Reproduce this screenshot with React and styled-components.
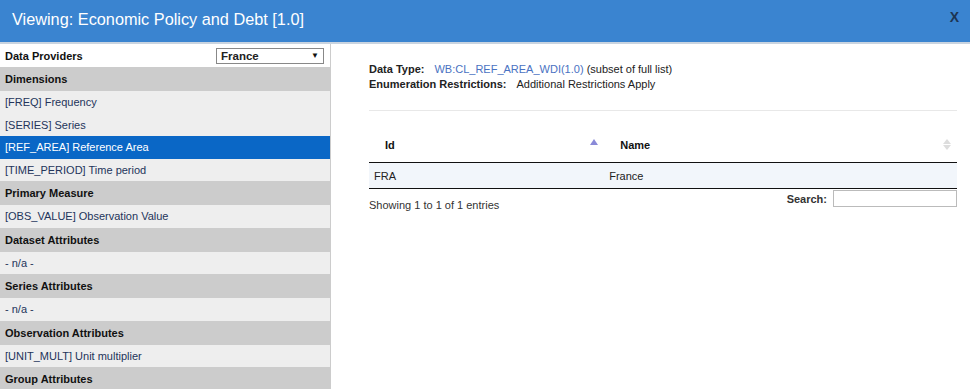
import React from 'react';
import styled, { createGlobalStyle } from 'styled-components';

const GlobalStyle = createGlobalStyle`
  html, body {
    margin: 0;
    padding: 0;
    background: #fff;
    font-family: "Liberation Sans", Arial, sans-serif;
  }
`;

const sections = [
  {
    title: 'Dimensions',
    items: ['[FREQ] Frequency', '[SERIES] Series', '[REF_AREA] Reference Area', '[TIME_PERIOD] Time period'],
  },
  { title: 'Primary Measure', items: ['[OBS_VALUE] Observation Value'] },
  { title: 'Dataset Attributes', items: ['- n/a -'] },
  { title: 'Series Attributes', items: ['- n/a -'] },
  { title: 'Observation Attributes', items: ['[UNIT_MULT] Unit multiplier'] },
  { title: 'Group Attributes', items: [] },
];

export default function App() {
  return (
    <Dialog>
      <GlobalStyle />
      <TitleBar>
        <Title>Viewing: Economic Policy and Debt [1.0]</Title>
        <Close>X</Close>
      </TitleBar>
      <Body>
        <Sidebar>
          <ProviderRow>
            <span>Data Providers</span>
            <Select>
              <span>France</span>
              <Arrow>▼</Arrow>
            </Select>
          </ProviderRow>
          {sections.map((s) => (
            <React.Fragment key={s.title}>
              <SectionHead>{s.title}</SectionHead>
              {s.items.map((it) => (
                <Item key={it} selected={it.startsWith('[REF_AREA]')}>
                  {it}
                </Item>
              ))}
            </React.Fragment>
          ))}
        </Sidebar>
        <Content>
          <Meta>
            <MetaLine>
              <Label>Data Type:</Label>
              <Link>WB:CL_REF_AREA_WDI(1.0)</Link> (subset of full list)
            </MetaLine>
            <MetaLine>
              <Label>Enumeration Restrictions:</Label>
              <span>Additional Restrictions Apply</span>
            </MetaLine>
          </Meta>
          <Rule />
          <Table>
            <thead>
              <tr>
                <Th style={{ width: '40%' }}>
                  Id
                  <SortUp />
                </Th>
                <Th>
                  Name
                  <SortBoth>
                    <span />
                    <span />
                  </SortBoth>
                </Th>
              </tr>
            </thead>
            <tbody>
              <tr>
                <Td>FRA</Td>
                <Td>France</Td>
              </tr>
            </tbody>
          </Table>
          <Footer>
            <Info>Showing 1 to 1 of 1 entries</Info>
            <Search>
              Search:
              <SearchInput />
            </Search>
          </Footer>
        </Content>
      </Body>
    </Dialog>
  );
}

const Dialog = styled.div`
  width: 970px;
  height: 389px;
  overflow: hidden;
  display: flex;
  flex-direction: column;
`;

const TitleBar = styled.div`
  height: 42px;
  flex: none;
  background: #3a84d0;
  border-bottom: 2px solid #c9d4e0;
  display: flex;
  align-items: center;
  justify-content: space-between;
  padding: 0 11px 0 12px;
`;

const Title = styled.h1`
  margin: 0;
  margin-top: -4px;
  font-size: 16.3px;
  font-weight: normal;
  color: #fff;
`;

const Close = styled.span`
  font-size: 14px;
  font-weight: bold;
  color: #1d3552;
  margin-top: -9px;
`;

const Body = styled.div`
  flex: 1;
  display: flex;
  min-height: 0;
`;

const Sidebar = styled.div`
  width: 330px;
  flex: none;
  border-right: 1px solid #ccc;
  font-size: 11px;
`;

const ProviderRow = styled.div`
  height: 23px;
  display: flex;
  align-items: center;
  justify-content: space-between;
  padding: 0 6px 0 5px;
  font-weight: bold;
  color: #111;
  background: #fff;
`;

const Select = styled.div`
  width: 98px;
  height: 14px;
  border: 1px solid #888;
  display: flex;
  align-items: center;
  justify-content: space-between;
  padding: 0 4px 0 4px;
  font-size: 11.5px;
  font-weight: bold;
  color: #222;
  box-sizing: content-box;
`;

const Arrow = styled.span`
  font-size: 8px;
  color: #111;
`;

const SectionHead = styled.div`
  height: 24px;
  display: flex;
  align-items: center;
  padding-left: 5px;
  background: #cccccc;
  font-weight: bold;
  color: #111;
`;

const Item = styled.div`
  height: 22.5px;
  display: flex;
  align-items: center;
  padding-left: 5px;
  background: ${(p) => (p.selected ? '#0a67c6' : '#eeeeee')};
  color: ${(p) => (p.selected ? '#fff' : '#23345a')};
`;

const Content = styled.div`
  flex: 1;
  padding: 18px 13px 0 38px;
  font-size: 11px;
  color: #222;
`;

const Meta = styled.div`
  display: flex;
  flex-direction: column;
  gap: 1px;
`;

const MetaLine = styled.div`
  line-height: 14px;
`;

const Label = styled.span`
  font-weight: bold;
  margin-right: 10px;
`;

const Link = styled.span`
  color: #4a72c2;
`;

const Rule = styled.div`
  height: 1px;
  background: #e8e8e8;
  margin: 19px 0 19px 0;
`;

const Table = styled.table`
  width: 100%;
  border-collapse: collapse;
  font-size: 11px;
`;

const Th = styled.th`
  position: relative;
  height: 30px;
  padding: 0 0 2px 16px;
  text-align: left;
  font-weight: bold;
  color: #111;
  border-bottom: 1px solid #111;
`;

const SortUp = styled.span`
  position: absolute;
  right: 6px;
  top: 9px;
  width: 0;
  height: 0;
  border-left: 4px solid transparent;
  border-right: 4px solid transparent;
  border-bottom: 6px solid #8a8ad8;
`;

const SortBoth = styled.span`
  position: absolute;
  right: 6px;
  top: 9px;
  display: flex;
  flex-direction: column;
  gap: 1px;
  span:first-child {
    width: 0;
    height: 0;
    border-left: 4px solid transparent;
    border-right: 4px solid transparent;
    border-bottom: 5px solid #ddd;
  }
  span:last-child {
    width: 0;
    height: 0;
    border-left: 4px solid transparent;
    border-right: 4px solid transparent;
    border-top: 5px solid #ddd;
  }
`;

const Td = styled.td`
  height: 25px;
  padding: 0 0 0 5px;
  background: #f2f6fb;
  color: #222;
  border-bottom: 1px solid #111;
`;

const Footer = styled.div`
  display: flex;
  justify-content: space-between;
  align-items: flex-start;
  color: #333;
`;

const Info = styled.span`
  padding-top: 10px;
`;

const Search = styled.label`
  display: flex;
  align-items: center;
  gap: 6px;
  padding-top: 1px;
  font-weight: bold;
  color: #333;
`;

const SearchInput = styled.input`
  width: 122px;
  height: 15px;
  border: 1px solid #bbb;
  padding: 0;
  margin: 0;
`;
